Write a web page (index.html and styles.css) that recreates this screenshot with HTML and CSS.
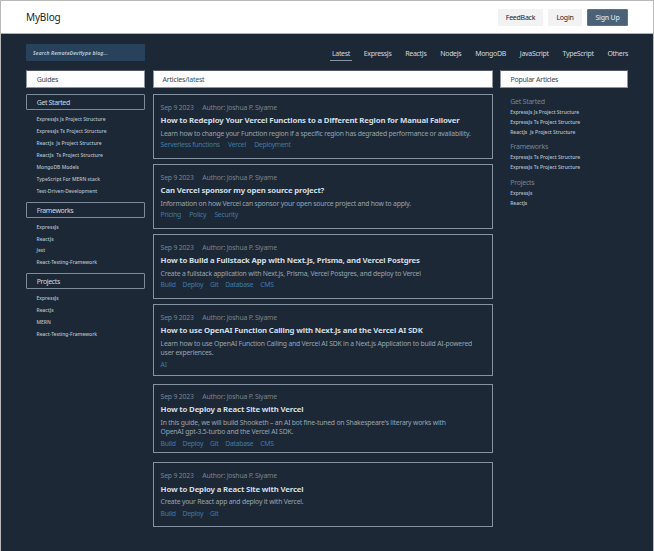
FILE: index.html
```html
<!DOCTYPE html>
<html lang="en">
<head>
<meta charset="utf-8">
<title>MyBlog</title>
<link rel="stylesheet" href="styles.css">
</head>
<body>
<div class="page">
<header class="header">
  <div class="brand">MyBlog</div>
  <div class="btn feedback">FeedBack</div>
  <div class="btn login">Login</div>
  <div class="btn primary">Sign Up</div>
</header>
<div class="toolbar">
  <div class="search">Search RemoteDevHype blog...</div>
  <nav class="nav"><a class="active">Latest</a><a>ExpressJs</a><a>ReactJs</a><a>NodeJs</a><a>MongoDB</a><a>JavaScript</a><a>TypeScript</a><a>Others</a></nav>
</div>
<div class="columns">
  <aside class="guides">
    <h2 class="heading">Guides</h2>
    <h3 class="group">Get Started</h3>
    <ul class="links"><li>ExpressJs Js Project Structure</li><li>ExpressJs Ts Project Structure</li><li>ReactJs&nbsp; Js Project Structure</li><li>ReactJs&nbsp; Ts Project Structure</li><li>MongoDB Models</li><li>TypeScript For MERN stack</li><li>Test-Driven-Development</li></ul>
    <h3 class="group">Frameworks</h3>
    <ul class="links frameworks"><li>ExpressJs</li><li>ReactJs</li><li>Jest</li><li>React-Testing-Framework</li></ul>
    <h3 class="group">Projects</h3>
    <ul class="links"><li>ExpressJs</li><li>ReactJs</li><li>MERN</li><li>React-Testing-Framework</li></ul>
  </aside>
  <main class="articles">
    <h2 class="heading">Articles/<span class="crumb">latest</span></h2>
    <article class="card">
      <div class="meta"><span>Sep 9 2023</span><span>Author: Joshua P. Siyame</span></div>
      <h4 class="title">How to Redeploy Your Vercel Functions to a Different Region for Manual Failover</h4>
      <p class="desc">Learn how to change your Function region if a specific region has degraded performance or availability.</p>
      <div class="tags wide"><a>Serverless functions</a><a>Vercel</a><a>Deployment</a></div>
    </article>
    <article class="card">
      <div class="meta"><span>Sep 9 2023</span><span>Author: Joshua P. Siyame</span></div>
      <h4 class="title">Can Vercel sponsor my open source project?</h4>
      <p class="desc">Information on how Vercel can sponsor your open source project and how to apply.</p>
      <div class="tags wide"><a>Pricing</a><a>Policy</a><a>Security</a></div>
    </article>
    <article class="card">
      <div class="meta"><span>Sep 9 2023</span><span>Author: Joshua P. Siyame</span></div>
      <h4 class="title">How to Build a Fullstack App with Next.js, Prisma, and Vercel Postgres</h4>
      <p class="desc">Create a fullstack application with Next.js, Prisma, Vercel Postgres, and deploy to Vercel</p>
      <div class="tags"><a>Build</a><a>Deploy</a><a>Git</a><a>Database</a><a>CMS</a></div>
    </article>
    <article class="card long">
      <div class="meta"><span>Sep 9 2023</span><span>Author: Joshua P. Siyame</span></div>
      <h4 class="title">How to use OpenAI Function Calling with Next.js and the Vercel AI SDK</h4>
      <p class="desc">Learn how to use OpenAI Function Calling and Vercel AI SDK in a Next.js Application to build AI-powered<br>user experiences.</p>
      <div class="tags"><a>AI</a></div>
    </article>
    <article class="card bot">
      <div class="meta"><span>Sep 9 2023</span><span>Author: Joshua P. Siyame</span></div>
      <h4 class="title">How to Deploy a React Site with Vercel</h4>
      <p class="desc">In this guide, we will build Shooketh – an AI bot fine-tuned on Shakespeare's literary works with<br>OpenAI gpt-3.5-turbo and the Vercel AI SDK.</p>
      <div class="tags"><a>Build</a><a>Deploy</a><a>Git</a><a>Database</a><a>CMS</a></div>
    </article>
    <article class="card last">
      <div class="meta"><span>Sep 9 2023</span><span>Author: Joshua P. Siyame</span></div>
      <h4 class="title">How to Deploy a React Site with Vercel</h4>
      <p class="desc">Create your React app and deploy it with Vercel.</p>
      <div class="tags"><a>Build</a><a>Deploy</a><a>Git</a></div>
    </article>
  </main>
  <aside class="popular">
    <h2 class="heading">Popular Articles</h2>
    <section><h3>Get Started</h3><p>ExpressJs Js Project Structure</p><p>ExpressJs Ts Project Structure</p><p>ReactJs&nbsp; Js Project Structure</p></section>
    <section><h3>Frameworks</h3><p>ExpressJs Ts Project Structure</p><p>ExpressJs Ts Project Structure</p></section>
    <section class="projects"><h3>Projects</h3><p>ExpressJs</p><p>ReactJs</p></section>
  </aside>
</div>
</div>
</body>
</html>
```
FILE: styles.css
```css
* { box-sizing: border-box; margin: 0; padding: 0; }
body { font-family: "Noto Sans", sans-serif; background: #1c2836; white-space: nowrap; }
ul { list-style: none; }
.page { width: 654px; height: 551px; overflow: hidden; border: 1px solid #b9b9b9; border-bottom: 0; }
.header { height: 33px; background: #fff; border-bottom: 1px solid #a9b3b3; display: flex; align-items: center; padding: 0 25px; }
.brand { flex: 1; font-size: 10px; letter-spacing: -.15px; color: #1c2029; }
.btn { height: 17px; line-height: 18px; background: #f2f2f2; color: #222; font-size: 7px; letter-spacing: -.24px; text-align: center; border-radius: 1px; margin-left: 5px; }
.feedback { width: 45px; }
.login { width: 34px; }
.primary { width: 41px; background: #4a6178; color: #d5e2ed; border: 1px solid #5d7488; line-height: 16px; font-weight: 500; }
.toolbar { display: flex; justify-content: space-between; padding: 10px 25px 0; height: 36px; }
.search { width: 119px; height: 17px; line-height: 18px; background: #27425a; padding-left: 7px; font-size: 5px; letter-spacing: .18px; font-style: italic; font-weight: 600; color: #c5d2da; border-radius: 1px; }
.nav { display: flex; gap: 13.8px; font-size: 7px; letter-spacing: -.32px; color: #ced8e0; line-height: 19px; }
.nav a { height: 17px; }
.active { border-bottom: 1px solid #8795a3; padding: 0 2px; margin-right: -2px; }
.columns { display: grid; grid-template-columns: 119px 340px 128px; gap: 7px; column-gap: 7.4px; padding-left: 25.2px; }
.heading { height: 18px; line-height: 17px; border: 1px solid #8f969b; border-top-color: #4f5862; background: #fff; color: #3a3f46; font-size: 7px; letter-spacing: -.25px; font-weight: 400; padding-left: 9.5px; }
.articles .heading { padding-left: 9px; letter-spacing: -.2px; }
.crumb { color: #315472; }
.group { height: 16px; line-height: 15px; border: 1px solid #7c8b9b; border-radius: 1px; margin-top: 5px; padding-left: 9.5px; font-size: 7px; letter-spacing: -.38px; font-weight: 400; color: #ced8e0; }
.heading + .group { margin-top: 6px; }
.links { padding: 3px 0 0 10.3px; font-size: 5px; line-height: 12px; color: #b8c4cf; font-weight: 500; }
.frameworks { padding-top: 4px; line-height: 11.6px; }
.card { height: 65px; border: 1px solid #8492a1; margin-top: 5px; padding: 8px 7px 0; }
.heading + .card { margin-top: 6px; }
.meta { display: flex; gap: 8.7px; font-size: 6.8px; letter-spacing: -.17px; line-height: 10px; color: #788694; }
.title { font-size: 7.8px; line-height: 12px; margin-top: 1px; font-weight: 700; letter-spacing: -.165px; color: #d0dce5; }
.desc { font-size: 6.8px; line-height: 9px; margin-top: 3px; letter-spacing: -.19px; color: #98a6b3; }
.tags { display: flex; gap: 6.8px; margin-top: 2px; font-size: 6.8px; letter-spacing: -.24px; line-height: 10px; color: #417ba8; }
.wide { gap: 8.2px; }
.long { height: 72px; }
.long .tags { margin-top: 3px; }
.bot { height: 69px; margin-top: 8px; padding-top: 7px; }
.bot .tags { margin-top: 3px; }
.last { height: 65px; margin-top: 9px; }
.last .title { margin-top: 2px; }
.last .desc { margin-top: 2px; }
.last .tags { margin-top: 3px; }
.popular section { padding-left: 10.2px; margin-top: 5px; font-size: 5px; line-height: 10px; color: #b8c4cf; font-weight: 500; }
.popular .heading + section { margin-top: 9px; }
.popular h3 { font-size: 7px; letter-spacing: -.25px; line-height: 10px; font-weight: 400; color: #788694; }
.popular .projects { margin-top: 6px; }
```
